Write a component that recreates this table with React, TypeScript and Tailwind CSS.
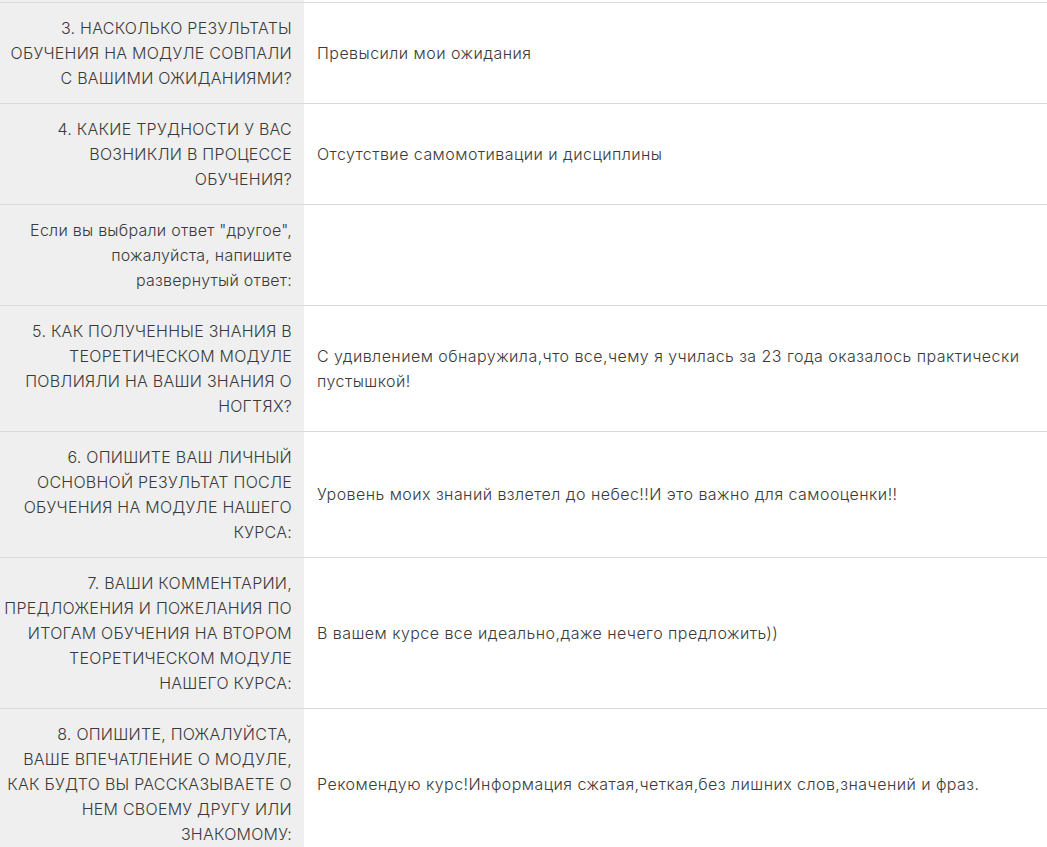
import React from "react"

type Row = {
  question: string[]
  answer: string[]
}

const rows: Row[] = [
  {
    question: ["3. НАСКОЛЬКО РЕЗУЛЬТАТЫ", "ОБУЧЕНИЯ НА МОДУЛЕ СОВПАЛИ", "С ВАШИМИ ОЖИДАНИЯМИ?"],
    answer: ["Превысили мои ожидания"],
  },
  {
    question: ["4. КАКИЕ ТРУДНОСТИ У ВАС", "ВОЗНИКЛИ В ПРОЦЕССЕ", "ОБУЧЕНИЯ?"],
    answer: ["Отсутствие самомотивации и дисциплины"],
  },
  {
    question: ["Если вы выбрали ответ \"другое\",", "пожалуйста, напишите", "развернутый ответ:"],
    answer: [],
  },
  {
    question: ["5. КАК ПОЛУЧЕННЫЕ ЗНАНИЯ В", "ТЕОРЕТИЧЕСКОМ МОДУЛЕ", "ПОВЛИЯЛИ НА ВАШИ ЗНАНИЯ О", "НОГТЯХ?"],
    answer: [
      "С удивлением обнаружила,что все,чему я училась за 23 года оказалось практически",
      "пустышкой!",
    ],
  },
  {
    question: ["6. ОПИШИТЕ ВАШ ЛИЧНЫЙ", "ОСНОВНОЙ РЕЗУЛЬТАТ ПОСЛЕ", "ОБУЧЕНИЯ НА МОДУЛЕ НАШЕГО", "КУРСА:"],
    answer: ["Уровень моих знаний взлетел до небес!!И это важно для самооценки!!"],
  },
  {
    question: [
      "7. ВАШИ КОММЕНТАРИИ,",
      "ПРЕДЛОЖЕНИЯ И ПОЖЕЛАНИЯ ПО",
      "ИТОГАМ ОБУЧЕНИЯ НА ВТОРОМ",
      "ТЕОРЕТИЧЕСКОМ МОДУЛЕ",
      "НАШЕГО КУРСА:",
    ],
    answer: ["В вашем курсе все идеально,даже нечего предложить))"],
  },
  {
    question: [
      "8. ОПИШИТЕ, ПОЖАЛУЙСТА,",
      "ВАШЕ ВПЕЧАТЛЕНИЕ О МОДУЛЕ,",
      "КАК БУДТО ВЫ РАССКАЗЫВАЕТЕ О",
      "НЕМ СВОЕМУ ДРУГУ ИЛИ",
      "ЗНАКОМОМУ:",
    ],
    answer: ["Рекомендую курс!Информация сжатая,четкая,без лишних слов,значений и фраз."],
  },
]

function Lines({ lines }: { lines: string[] }) {
  return (
    <>
      {lines.map((line, i) => (
        <span key={i} className="block whitespace-nowrap">
          {line}
        </span>
      ))}
    </>
  )
}

function AnswerRow({ row }: { row: Row }) {
  return (
    <div className="flex border-t border-[#dadada]">
      <div className="w-[304px] shrink-0 bg-[#efefef] py-[12.5px] pr-[12px] pl-1 text-right tracking-[0.25px]">
        <Lines lines={row.question} />
      </div>
      <div className="flex flex-1 items-center px-[13px] py-[12.5px] tracking-[0.45px]">
        <div>
          <Lines lines={row.answer} />
        </div>
      </div>
    </div>
  )
}

export default function App() {
  return (
    <div
      className="h-[847px] w-[1047px] overflow-hidden bg-white text-[16px] leading-[25px] font-light text-[#3a3a3a]"
      style={{ fontFamily: "Inter, 'Noto Sans', sans-serif" }}
    >
      <div className="flex h-[2px]">
        <div className="w-[304px] bg-[#efefef]" />
        <div className="flex-1" />
      </div>
      {rows.map((row, i) => (
        <AnswerRow key={i} row={row} />
      ))}
    </div>
  )
}
